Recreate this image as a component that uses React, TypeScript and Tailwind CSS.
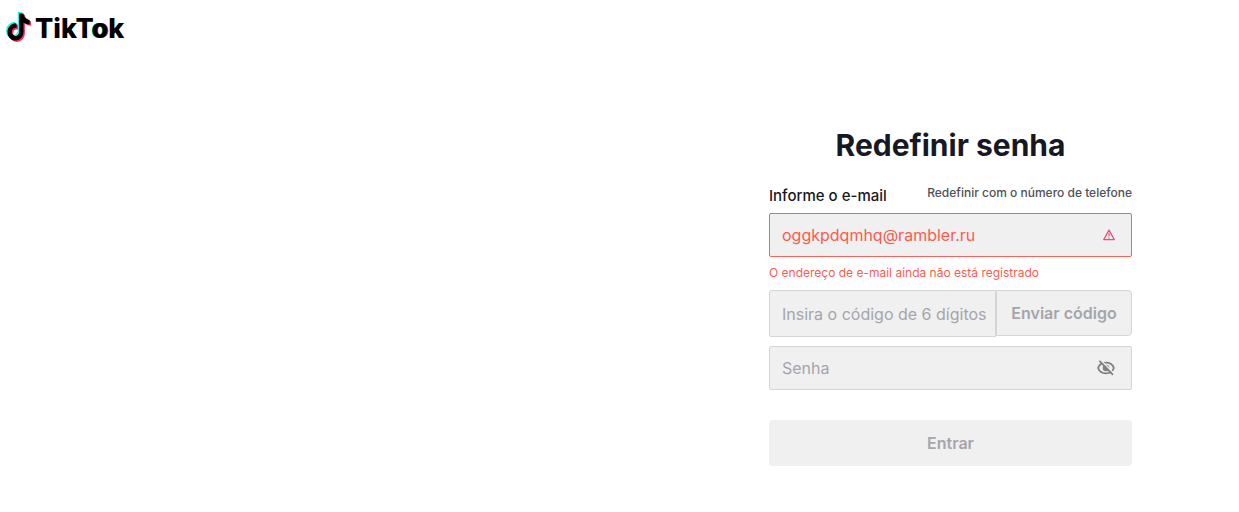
import { useState } from 'react'

const NOTE_PATH =
  'M448,209.91a210.06,210.06,0,0,1-122.77-39.25V349.38A162.55,162.55,0,1,1,185,188.31V278.2a74.62,74.62,0,1,0,52.23,71.18V0l88,0a121.18,121.18,0,0,0,1.86,22.17h0A122.18,122.18,0,0,0,381,102.39a121.43,121.43,0,0,0,67,20.14Z'

function NoteIcon() {
  return (
    <svg className="h-[30px] w-[25px]" viewBox="-28 -26 504 564" preserveAspectRatio="none" aria-hidden="true">
      <path d={NOTE_PATH} fill="#25f4ee" transform="translate(-28 -24)" />
      <path d={NOTE_PATH} fill="#fe2c55" transform="translate(28 24)" />
      <path d={NOTE_PATH} fill="#000" />
    </svg>
  )
}

function WarningIcon() {
  return (
    <svg className="h-3 w-3" viewBox="0 0 12 12" fill="none" stroke="#f54a6b" strokeLinejoin="round" aria-hidden="true">
      <path d="M6 1.1 11.3 10.6H.7Z" strokeWidth="1.2" />
      <path d="M6 4.2V7.3M6 8.2V9.4" strokeWidth="1.2" />
    </svg>
  )
}

function EyeOffIcon() {
  return (
    <svg className="h-4 w-[18px]" viewBox="0 0 18 16" fill="none" aria-hidden="true">
      <path d="M9 2.7C4.8 2.7 2 5.4 1.1 8c.9 2.6 3.7 5.3 7.9 5.3s7-2.7 7.9-5.3C16 5.4 13.2 2.7 9 2.7Z" stroke="#808084" strokeWidth="1.8" />
      <circle cx="9" cy="8" r="3.3" fill="#808084" />
      <path d="M3.6-.1 17.2 13.7" stroke="#f0f0f0" strokeWidth="1.4" />
      <path d="M2.4.8 16 14.8" stroke="#808084" strokeWidth="1.8" />
    </svg>
  )
}

function App() {
  const [email, setEmail] = useState('oggkpdqmhq@rambler.ru')
  const [code, setCode] = useState('')
  const [password, setPassword] = useState('')
  const [visible, setVisible] = useState(false)

  return (
    <div className="min-h-screen bg-white font-[Inter,sans-serif] text-[#161823]">
      <header className="flex px-1.5 pt-[11px]">
        <a href="#" className="flex items-center gap-1 text-black">
          <NoteIcon />
          <span className="pt-1 text-[27px] leading-7 font-extrabold">
            TikT
            <span className="[text-shadow:-1px_0_#25f4ee,1px_0_#fe2c55]">o</span>k
          </span>
        </a>
      </header>

      <main className="flex justify-end pt-[82px] pr-[107px]">
        <form className="w-[363px]" onSubmit={(e) => e.preventDefault()}>
          <h1 className="text-center text-[30px] leading-10 font-bold">Redefinir senha</h1>

          <div className="mt-5 flex items-start justify-between">
            <label htmlFor="email" className="pt-px text-[15px] leading-5 font-medium">
              Informe o e-mail
            </label>
            <a href="#" className="text-xs leading-4 font-medium text-[#505159]">
              Redefinir com o número de telefone
            </a>
          </div>

          <div className="mt-[7px] flex h-11 items-center rounded-xs border border-[#f5655c] bg-[#f0f0f1] pr-4 pl-3">
            <input
              id="email"
              type="text"
              value={email}
              onChange={(e) => setEmail(e.target.value)}
              aria-invalid="true"
              aria-describedby="email-error"
              className="min-w-0 flex-1 bg-transparent text-base text-[#ff5a4f] outline-none"
            />
            <WarningIcon />
          </div>
          <p id="email-error" className="mt-2 text-xs leading-4 text-[#ff5a4f]">
            O endereço de e-mail ainda não está registrado
          </p>

          <div className="mt-[9px] flex items-start">
            <input
              type="text"
              aria-label="Insira o código de 6 dígitos"
              placeholder="Insira o código de 6 dígitos"
              value={code}
              onChange={(e) => setCode(e.target.value)}
              className="h-[47px] min-w-0 flex-1 rounded-l-xs border border-[#d5d5d8] bg-[#f0f0f0] pl-3 text-base outline-none placeholder:text-[#a5a5ab]"
            />
            <button
              type="button"
              disabled
              className="h-[46px] w-[136px] rounded-r-sm border border-[#d5d5d8] bg-[#f0f0f0] text-base font-semibold text-[#a5a5ab]"
            >
              Enviar código
            </button>
          </div>

          <div className="mt-[9px] flex h-11 items-center rounded-xs border border-[#d5d5d8] bg-[#f0f0f0] pr-4 pl-3">
            <input
              type={visible ? 'text' : 'password'}
              aria-label="Senha"
              placeholder="Senha"
              value={password}
              onChange={(e) => setPassword(e.target.value)}
              className="min-w-0 flex-1 bg-transparent text-base outline-none placeholder:text-[#a5a5ab]"
            />
            <button type="button" aria-label="Mostrar senha" onClick={() => setVisible(!visible)}>
              <EyeOffIcon />
            </button>
          </div>

          <button
            type="submit"
            disabled
            className="mt-[30px] h-[46px] w-full rounded-sm bg-[#f0f0f0] text-base font-semibold text-[#a5a5ab]"
          >
            Entrar
          </button>
        </form>
      </main>
    </div>
  )
}

export default App
